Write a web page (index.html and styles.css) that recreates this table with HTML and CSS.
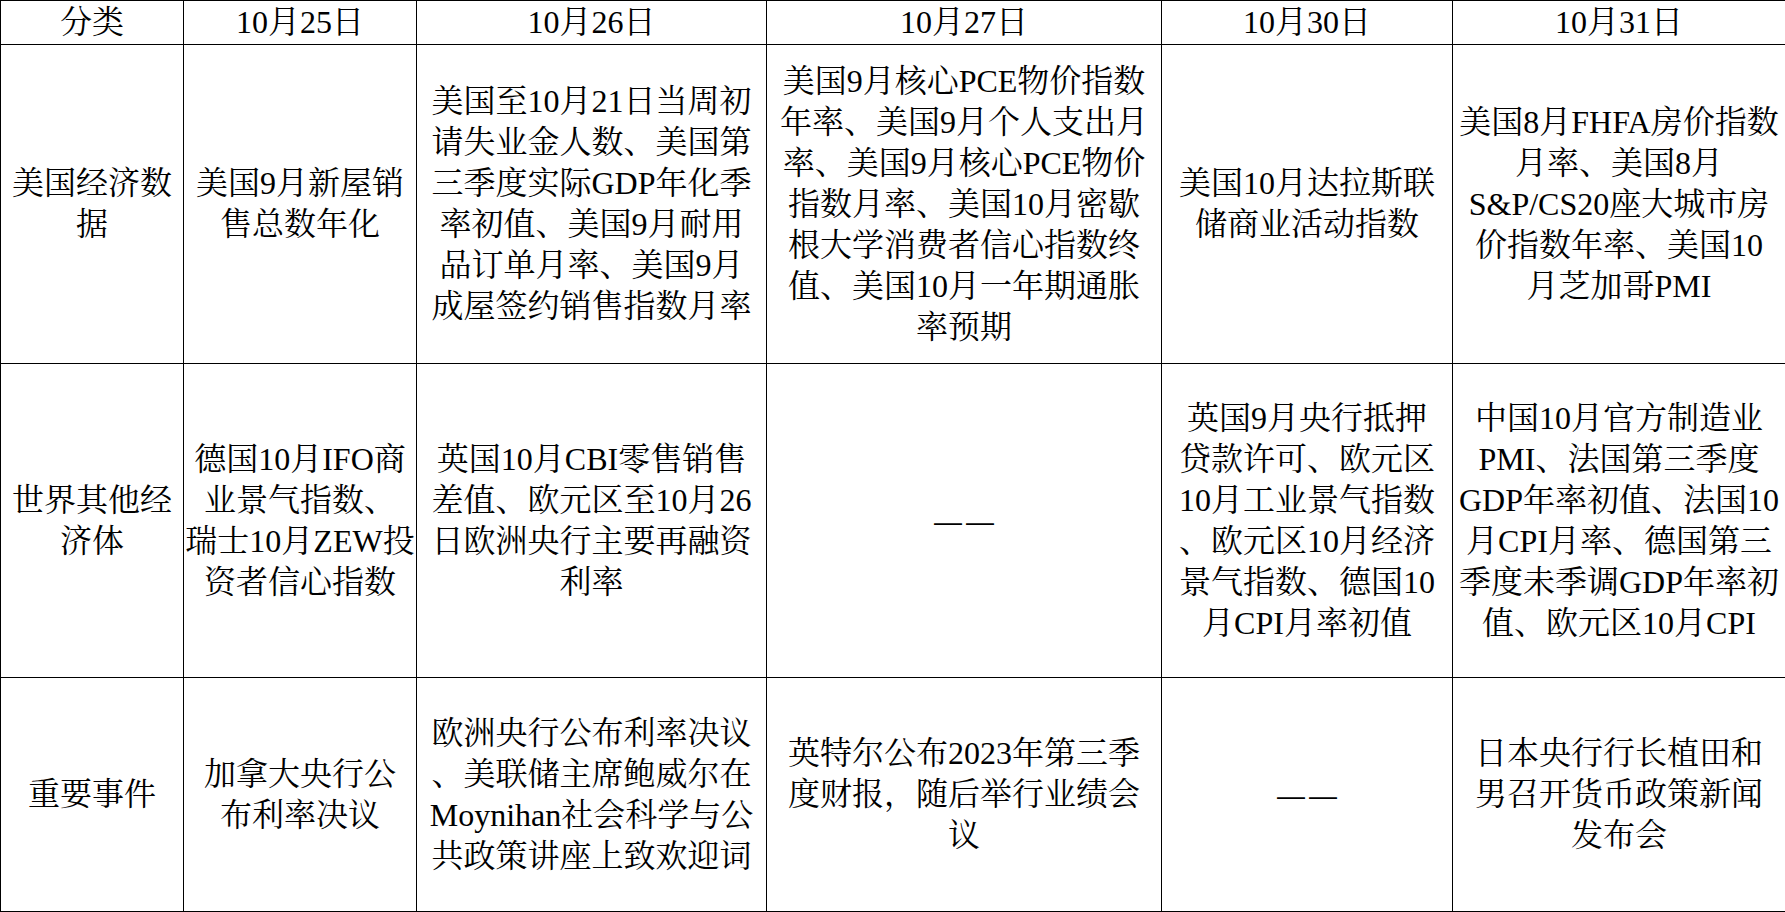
FILE: index.html
```html
<!DOCTYPE html>
<html lang="zh-CN">
<head>
<meta charset="utf-8">
<title>经济日历</title>
<link rel="stylesheet" href="styles.css">
</head>
<body>
<table class="cal">
  <colgroup>
    <col class="c1"><col class="c2"><col class="c3"><col class="c4"><col class="c5"><col class="c6">
  </colgroup>
  <tr class="r-head">
    <td>分类</td><td>10月25日</td><td>10月26日</td><td>10月27日</td><td>10月30日</td><td>10月31日</td>
  </tr>
  <tr class="r-1">
    <td>美国经济数<br>据</td>
    <td>美国9月新屋销<br>售总数年化</td>
    <td>美国至10月21日当周初<br>请失业金人数、美国第<br>三季度实际GDP年化季<br>率初值、美国9月耐用<br>品订单月率、美国9月<br>成屋签约销售指数月率</td>
    <td>美国9月核心PCE物价指数<br>年率、美国9月个人支出月<br>率、美国9月核心PCE物价<br>指数月率、美国10月密歇<br>根大学消费者信心指数终<br>值、美国10月一年期通胀<br>率预期</td>
    <td>美国10月达拉斯联<br>储商业活动指数</td>
    <td>美国8月FHFA房价指数<br>月率、美国8月<br>S&amp;P/CS20座大城市房<br>价指数年率、美国10<br>月芝加哥PMI</td>
  </tr>
  <tr class="r-2">
    <td>世界其他经<br>济体</td>
    <td>德国10月IFO商<br>业景气指数、<br>瑞士10月ZEW投<br>资者信心指数</td>
    <td>英国10月CBI零售销售<br>差值、欧元区至10月26<br>日欧洲央行主要再融资<br>利率</td>
    <td><span class="dash">——</span></td>
    <td>英国9月央行抵押<br>贷款许可、欧元区<br>10月工业景气指数<br>、欧元区10月经济<br>景气指数、德国10<br>月CPI月率初值</td>
    <td>中国10月官方制造业<br>PMI、法国第三季度<br>GDP年率初值、法国10<br>月CPI月率、德国第三<br>季度未季调GDP年率初<br>值、欧元区10月CPI</td>
  </tr>
  <tr class="r-3">
    <td>重要事件</td>
    <td>加拿大央行公<br>布利率决议</td>
    <td>欧洲央行公布利率决议<br>、美联储主席鲍威尔在<br>Moynihan社会科学与公<br>共政策讲座上致欢迎词</td>
    <td>英特尔公布2023年第三季<br>度财报，随后举行业绩会<br>议</td>
    <td><span class="dash">——</span></td>
    <td>日本央行行长植田和<br>男召开货币政策新闻<br>发布会</td>
  </tr>
</table>
</body>
</html>
```
FILE: styles.css
```css
html, body {
  margin: 0;
  padding: 0;
  background: #ffffff;
}
.cal {
  border-collapse: collapse;
  table-layout: fixed;
  width: 1785px;
  height: 911px;
  font-family: "Liberation Serif", "Noto Serif CJK SC", "Noto Sans CJK SC", serif;
  font-size: 32px;
  line-height: 41px;
  color: #000000;
}
.cal td {
  border: 1px solid #000000;
  padding: 0;
  text-align: center;
  vertical-align: middle;
  white-space: nowrap;
  overflow: visible;
}
.dash {
  font-family: "Liberation Sans", sans-serif;
  font-size: 28px;
  letter-spacing: 4px;
  margin-right: -4px;
}
.c1 { width: 183px; }
.c2 { width: 233px; }
.c3 { width: 350px; }
.c4 { width: 395px; }
.c5 { width: 291px; }
.c6 { width: 333px; }
.r-head { height: 44px; }
.r-1 { height: 319px; }
.r-2 { height: 314px; }
.r-3 { height: 234px; }
```
